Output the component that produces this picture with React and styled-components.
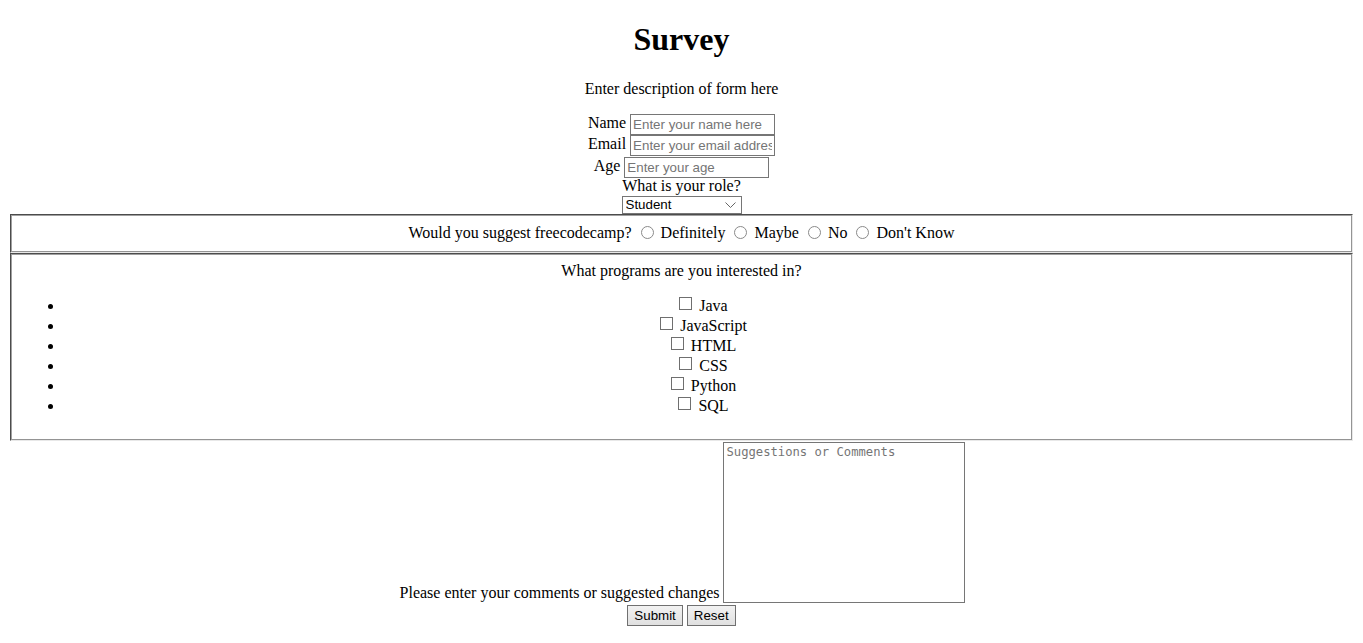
import React from "react";
import styled, { createGlobalStyle } from "styled-components";

const GlobalStyle = createGlobalStyle`
  body {
    margin: 0 8px 8px;
    font-family: "Liberation Serif", "Times New Roman", serif;
    font-size: 16px;
    color: #000;
    background: #fff;
  }
`;

const Page = styled.div`
  text-align: center;
`;

const Title = styled.h1`
  font-size: 2em;
  font-weight: bold;
  margin: 0.67em 0;
  line-height: 37px;
`;

const Description = styled.p`
  margin: 16px 0 14px;
  line-height: 18px;
`;

const Row = styled.div`
  box-sizing: border-box;
  height: ${(p) => p.$h || 21}px;
  padding-top: ${(p) => p.$pt || 0}px;
  line-height: ${(p) => (p.$h || 21) - (p.$pt || 0)}px;
`;

const Label = styled.label``;

const TextInput = styled.input`
  font-family: "Liberation Sans", Arial, sans-serif;
  font-size: 13.33px;
  width: 145px;
  height: 21px;
  box-sizing: border-box;
  padding: 1px 2px;
  border: 1px solid #767676;
  margin: 0 0 0 4px;
  vertical-align: middle;
  &::placeholder {
    color: #757575;
  }
`;

const SelectWrap = styled.span`
  position: relative;
  display: inline-block;
  vertical-align: top;
  height: 18px;
`;

const RoleSelect = styled.select`
  appearance: none;
  font-family: "Liberation Sans", Arial, sans-serif;
  font-size: 13.33px;
  width: 120px;
  height: 18px;
  box-sizing: border-box;
  border: 1px solid #767676;
  border-radius: 0;
  background: #fff;
  color: #000;
  padding: 0 0 0 3px;
  display: block;
`;

const Chevron = styled.svg`
  position: absolute;
  right: 6px;
  top: 6px;
  pointer-events: none;
`;

const Group = styled.fieldset`
  margin: 0 2px;
  padding: ${(p) => p.$pad};
  border: 2px groove #c0c0c0;
  border-color: #a0a0a0 #e8e8e8 #e8e8e8 #a0a0a0;
  line-height: 20px;
`;

const Radio = styled.input.attrs({ type: "radio" })`
  appearance: none;
  width: 13px;
  height: 13px;
  box-sizing: border-box;
  border: 1px solid #8a8a8a;
  border-radius: 50%;
  background: #fff;
  margin: 0 3px 0 5px;
  vertical-align: -1px;
  &:checked {
    background: radial-gradient(circle, #333 0 3px, #fff 3.5px);
  }
`;

const ProgramsTitle = styled.div``;

const ProgramList = styled.ul`
  margin: 15px 0;
  padding-left: 40px;
  list-style: disc;
`;

const ProgramItem = styled.li`
  line-height: 20px;
  height: 20px;
`;

const Checkbox = styled.input.attrs({ type: "checkbox" })`
  appearance: none;
  width: 13px;
  height: 13px;
  box-sizing: border-box;
  border: 1px solid #6f6f6f;
  border-radius: 0;
  background: #fff;
  margin: 0 3px 0 4px;
  vertical-align: 1px;
  &:checked {
    background: #333;
  }
`;

const CommentsRow = styled.div`
  display: flex;
  justify-content: center;
  align-items: flex-end;
  gap: 4px;
  margin-top: 1px;
  padding-left: 2px;
`;

const CommentsLabel = styled.label`
  line-height: 18px;
  margin-bottom: 1px;
`;

const Comments = styled.textarea`
  width: 242px;
  height: 161px;
  box-sizing: border-box;
  font-family: "DejaVu Sans Mono", "Liberation Mono", monospace;
  font-size: 12.2px;
  padding: 2px;
  border: 1px solid #767676;
  resize: none;
  margin: 0;
  &::placeholder {
    color: #757575;
  }
`;

const ButtonRow = styled.div`
  display: flex;
  justify-content: center;
  gap: 4px;
  margin-top: 2px;
`;

const Button = styled.button`
  font-family: "Liberation Sans", Arial, sans-serif;
  font-size: 13.33px;
  height: 21px;
  padding: 0 6px;
  margin: 0;
  border: 1px solid #707070;
  border-radius: 0;
  background: linear-gradient(#f2f2f2, #e0e0e0);
  color: #000;
`;

const choices = ["Definitely", "Maybe", "No", "Don't Know"];
const programs = ["Java", "JavaScript", "HTML", "CSS", "Python", "SQL"];

export default function App() {
  return (
    <Page>
      <GlobalStyle />
      <Title>Survey</Title>
      <Description>Enter description of form here</Description>
      <form onSubmit={(e) => e.preventDefault()}>
        <Row>
          <Label htmlFor="name">Name</Label>
          <TextInput id="name" placeholder="Enter your name here" />
        </Row>
        <Row>
          <Label htmlFor="email">Email</Label>
          <TextInput id="email" placeholder="Enter your email address" />
        </Row>
        <Row $h={22} $pt={1}>
          <Label htmlFor="age">Age</Label>
          <TextInput id="age" placeholder="Enter your age" />
        </Row>
        <Row $h={19}>What is your role?</Row>
        <Row $h={19} $pt={1}>
          <SelectWrap>
            <RoleSelect defaultValue="Student">
              <option>Student</option>
              <option>Teacher</option>
              <option>Other</option>
            </RoleSelect>
            <Chevron width="11" height="6" viewBox="0 0 11 6">
              <path d="M0.5 0.5 L5.5 5.5 L10.5 0.5" fill="none" stroke="#666" strokeWidth="1" />
            </Chevron>
          </SelectWrap>
        </Row>
        <Group $pad="7px 12px 8px">
          Would you suggest freecodecamp?
          {choices.map((c) => (
            <React.Fragment key={c}>
              {" "}
              <Radio name="suggest" value={c} /> {c}
            </React.Fragment>
          ))}
        </Group>
        <Group $pad="6px 12px 8px">
          <ProgramsTitle>What programs are you interested in?</ProgramsTitle>
          <ProgramList>
            {programs.map((p) => (
              <ProgramItem key={p}>
                <Checkbox value={p} /> {p}
              </ProgramItem>
            ))}
          </ProgramList>
        </Group>
        <CommentsRow>
          <CommentsLabel htmlFor="comments">Please enter your comments or suggested changes</CommentsLabel>
          <Comments id="comments" placeholder="Suggestions or Comments" />
        </CommentsRow>
        <ButtonRow>
          <Button type="submit">Submit</Button>
          <Button type="reset">Reset</Button>
        </ButtonRow>
      </form>
    </Page>
  );
}
